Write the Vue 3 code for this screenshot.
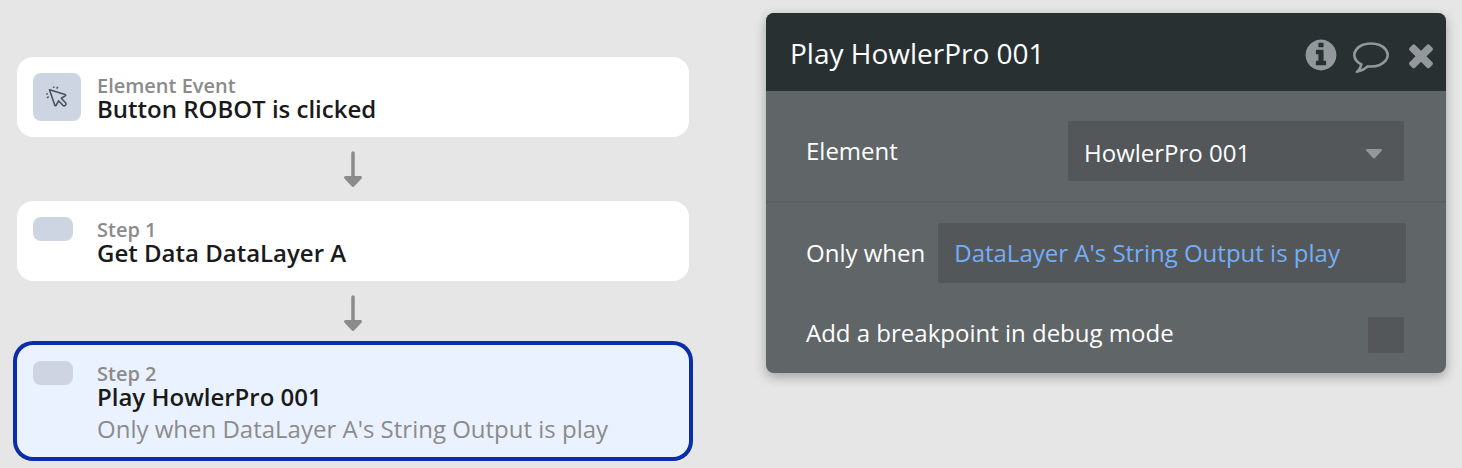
<script setup>
import { ref } from 'vue'

const steps = [
  { label: 'Element Event', title: 'Button ROBOT is clicked', event: true },
  { label: 'Step 1', title: 'Get Data DataLayer A' },
  {
    label: 'Step 2',
    title: 'Play HowlerPro 001',
    condition: "Only when DataLayer A's String Output is play",
    selected: true
  }
]

const element = ref('HowlerPro 001')
const condition = ref("DataLayer A's String Output is play")
const breakpoint = ref(false)
</script>

<template>
  <main class="editor">
    <ol class="flow">
      <li v-for="(step, i) in steps" :key="step.label" class="step">
        <svg v-if="i > 0" class="arrow" viewBox="0 0 20 64" aria-hidden="true">
          <path d="M10 16V42" fill="none" stroke="#8b8b8b" stroke-width="3.500" stroke-linecap="round" />
          <path d="M2.500 40.500H17.500L10 48.500Z" fill="#8b8b8b" stroke="#8b8b8b" stroke-width="3" stroke-linejoin="round" />
        </svg>
        <article class="card" :class="{ selected: step.selected }">
          <div class="thumb-slot">
            <div v-if="step.event" class="thumb event">
              <svg viewBox="0 0 24 24" fill="none" stroke="#475362" aria-hidden="true">
                <path d="M4.500 4.800L20.200 9.600Q21.200 10.200 20.200 10.900L16.300 13.300L20.800 18Q21.500 19.300 20.300 20.400Q19 21.300 17.900 20.300L13.600 15.800L11 20.500Q10.300 21.200 9.800 20.300Z" stroke-width="1.600" stroke-linejoin="round" />
                <path d="M8.600 2.900L8.900 1.600M11.800 3.600L12.700 1.800M2.800 8.700L1.200 9M3.700 11.700L2 12.800" stroke-width="1.600" />
              </svg>
            </div>
            <div v-else class="thumb"></div>
          </div>
          <div class="text">
            <p class="label">{{ step.label }}</p>
            <h2 class="title">{{ step.title }}</h2>
            <p v-if="step.condition" class="condition">{{ step.condition }}</p>
          </div>
        </article>
      </li>
    </ol>

    <section class="panel">
      <header class="panel-head">
        <h1>Play HowlerPro 001</h1>
        <button type="button" aria-label="Info">
          <svg viewBox="0 0 1792 1792"><path d="M1152 1376v-160q0-14-9-23t-23-9h-96v-512q0-14-9-23t-23-9h-320q-14 0-23 9t-9 23v160q0 14 9 23t23 9h96v320h-96q-14 0-23 9t-9 23v160q0 14 9 23t23 9h448q14 0 23-9t9-23zm-128-896v-160q0-14-9-23t-23-9h-192q-14 0-23 9t-9 23v160q0 14 9 23t23 9h192q14 0 23-9t9-23zm640 416q0 209-103 385.500t-279.500 279.500-385.500 103-385.500-103-279.500-279.500-103-385.500 103-385.500 279.500-279.500 385.500-103 385.500 103 279.500 279.500 103 385.500z" /></svg>
        </button>
        <button type="button" aria-label="Comment">
          <svg viewBox="0 0 1792 1792"><path d="M896 384q-204 0-381.500 69.500t-282 187.500-104.500 255q0 112 71.500 213.500t201.500 175.500l87 50-27 96q-24 91-70 172 152-63 275-171l43-38 57 6q69 8 130 8 204 0 381.500-69.500t282-187.500 104.500-255-104.500-255-282-187.500-381.500-69.500zm896 512q0 174-120 321.500t-326 233-450 85.500q-70 0-145-8-198 175-460 242-49 14-114 22h-5q-15 0-27-10.500t-16-27.500v-1q-3-4-.5-12t2-10 4.500-9.500l6-9 7-8.500 8-9q7-8 31-34.500t34.500-38 31-39.500 32.500-51 27-59 26-76q-157-89-247.500-220t-90.500-281q0-174 120-321.500t326-233 450-85.500 450 85.500 326 233 120 321.500z" /></svg>
        </button>
        <button type="button" aria-label="Close">
          <svg viewBox="0 0 1792 1792"><path d="M1490 1322q0 40-28 68l-136 136q-28 28-68 28t-68-28l-294-294-294 294q-28 28-68 28t-68-28l-136-136q-28-28-28-68t28-68l294-294-294-294q-28-28-28-68t28-68l136-136q28-28 68-28t68 28l294 294 294-294q28-28 68-28t68 28l136 136q28 28 28 68t-28 68l-294 294 294 294q28 28 28 68z" /></svg>
        </button>
      </header>

      <div class="row element-row">
        <label for="element">Element</label>
        <div class="select-wrap">
          <select id="element" v-model="element" class="field dropdown">
            <option>HowlerPro 001</option>
          </select>
          <svg class="caret" viewBox="0 0 16 10" aria-hidden="true">
            <path d="M1 1H15L8 8.500Z" fill="#93979a" stroke="#93979a" stroke-width="2" stroke-linejoin="round" />
          </svg>
        </div>
      </div>

      <div class="row condition-row">
        <label for="condition">Only when</label>
        <input id="condition" v-model="condition" type="text" class="field expression" />
      </div>

      <div class="row breakpoint-row">
        <label for="breakpoint">Add a breakpoint in debug mode</label>
        <input id="breakpoint" v-model="breakpoint" type="checkbox" />
      </div>
    </section>
  </main>
</template>

<style>
body {
  background: #e6e6e6;
}
</style>

<style scoped>
.editor {
  display: grid;
  grid-template-columns: minmax(0, 672fr) minmax(0, 680fr);
  column-gap: 77px;
  align-items: start;
  padding: 13px 16px 0 17px;
  font-family: "Open Sans", "Noto Sans", sans-serif;
  font-size: 24px;
  line-height: 24px;
}

h1,
h2,
p {
  margin: 0;
  font-size: inherit;
}

.flow {
  list-style: none;
  margin: 0;
  padding: 44px 0 8px;
}

.arrow {
  display: block;
  width: 20px;
  height: 64px;
  margin: 0 auto;
}

.card {
  display: flex;
  padding: 16px;
  border-radius: 16px;
  background: #fff;
}

.card.selected {
  background: #ebf2ff;
  box-shadow: 0 0 0 4px #0b2da5;
}

.thumb-slot {
  flex: 0 0 64px;
}

.thumb {
  width: 40px;
  height: 24px;
  border-radius: 8px;
  background: #cdd5e2;
}

.selected .thumb {
  background: #ced4e2;
}

.thumb.event {
  display: grid;
  place-items: center;
  width: 48px;
  height: 48px;
}

.thumb.event svg {
  width: 24px;
  height: 24px;
}

.label {
  padding-top: 2px;
  font-size: 20px;
  line-height: 22px;
  font-weight: 600;
  color: #8b8b8b;
}

.title {
  font-weight: 600;
  color: #1a1a1a;
}

.condition {
  margin-top: 8px;
  color: #8b8b8b;
}

.panel {
  overflow: hidden;
  border-radius: 8px;
  background: #606567;
  color: #fff;
  box-shadow: 0 4px 12px rgba(0, 0, 0, 0.3);
}

.panel-head {
  display: flex;
  align-items: center;
  gap: 14px;
  padding: 24px 7px 18px 24px;
  background: #293032;
}

.panel-head h1 {
  flex: 1;
  padding-bottom: 4px;
  font-size: 28px;
  line-height: 32px;
  font-weight: 400;
}

.panel-head button {
  padding: 0;
  border: 0;
  background: none;
}

.panel-head svg {
  display: block;
  width: 36px;
  height: 36px;
  fill: #92989b;
}

.row {
  display: flex;
  align-items: center;
  justify-content: space-between;
}

.field {
  box-sizing: border-box;
  width: 100%;
  height: 60px;
  margin: 0;
  padding: 0 16px 2px;
  border: 0;
  border-radius: 2px;
  background: #535759;
  color: #fff;
  font: inherit;
  appearance: none;
}

.dropdown {
  padding: 4px 16px 0;
}

.element-row {
  padding: 30px 42px 20px 40px;
  border-bottom: 2px solid #5a5f61;
}

.select-wrap {
  position: relative;
  flex: 0 1 336px;
}

.caret {
  position: absolute;
  top: 28px;
  right: 22px;
  width: 16px;
  height: 10px;
  pointer-events: none;
}

.condition-row {
  gap: 13px;
  padding: 20px 40px 0;
}

.condition-row label {
  flex: none;
}

.expression {
  flex: 1;
  min-width: 0;
  color: #73aef8;
}

.breakpoint-row {
  padding: 34px 42px 20px 40px;
}

.breakpoint-row label {
  padding-bottom: 4px;
}

.breakpoint-row input {
  appearance: none;
  width: 36px;
  height: 36px;
  margin: 0;
  border-radius: 2px;
  background: #535759;
}

.breakpoint-row input:checked {
  background: #73aef8;
}
</style>
